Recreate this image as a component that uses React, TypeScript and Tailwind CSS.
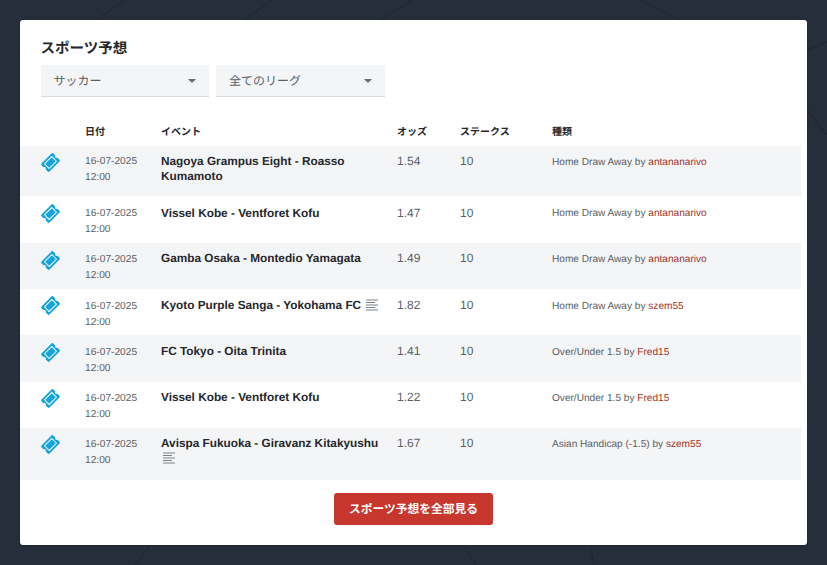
import React from "react";
import { FaTicketAlt } from "react-icons/fa";

const rows = [
  { event: "Nagoya Grampus Eight - Roasso Kumamoto", odds: "1.54", type: "Home Draw Away", user: "antananarivo", height: "h-[50px]", icon: "pt-[8px]", date: "pt-[8px]", main: "pt-[8px]", by: "pt-[9px]" },
  { event: "Vissel Kobe - Ventforet Kofu", odds: "1.47", type: "Home Draw Away", user: "antananarivo", height: "h-[47px]", icon: "pt-[9px]", date: "pt-[10px]", main: "pt-[10px]", by: "pt-[10px]" },
  { event: "Gamba Osaka - Montedio Yamagata", odds: "1.49", type: "Home Draw Away", user: "antananarivo", height: "h-[46px]", icon: "pt-[9px]", date: "pt-[9px]", main: "pt-[8px]", by: "pt-[9px]" },
  { event: "Kyoto Purple Sanga - Yokohama FC", odds: "1.82", type: "Home Draw Away", user: "szem55", notes: true, height: "h-[46px]", icon: "pt-[8px]", date: "pt-[10px]", main: "pt-[9px]", by: "pt-[10px]" },
  { event: "FC Tokyo - Oita Trinita", odds: "1.41", type: "Over/Under 1.5", user: "Fred15", height: "h-[47px]", icon: "pt-[9px]", date: "pt-[10px]", main: "pt-[9px]", by: "pt-[10px]" },
  { event: "Vissel Kobe - Ventforet Kofu", odds: "1.22", type: "Over/Under 1.5", user: "Fred15", height: "h-[46px]", icon: "pt-[8px]", date: "pt-[9px]", main: "pt-[8px]", by: "pt-[9px]" },
  { event: "Avispa Fukuoka - Giravanz Kitakyushu", odds: "1.67", type: "Asian Handicap (-1.5)", user: "szem55", notes: true, height: "h-[52px]", icon: "pt-[8px]", date: "pt-[9px]", main: "pt-[8px]", by: "pt-[9px]" },
];

function NotesIcon() {
  return (
    <svg width="13" height="13" viewBox="0 0 13 13" className="ml-[1.5px] inline-block align-[-3px]" fill="#7b8087">
      <rect x="0" y="0.5" width="12" height="1" />
      <rect x="0" y="3" width="9" height="1" />
      <rect x="0" y="5.5" width="12" height="1" />
      <rect x="0" y="8" width="9" height="1" />
      <rect x="0" y="10.5" width="12" height="1" />
    </svg>
  );
}

function Select({ label }: { label: string }) {
  return (
    <div className="flex h-8 w-[168.5px] items-center justify-between border-b border-[#d9dce0] bg-[#f4f5f7] pl-[13px] pr-[13px] text-[12px] text-[#5c5f64]">
      <span>{label}</span>
      <span className="h-0 w-0 border-x-[4.5px] border-t-[4.5px] border-x-transparent border-t-[#666b72]" />
    </div>
  );
}

export default function App() {
  return (
    <div className="relative min-h-screen overflow-hidden bg-[#262d3b] px-5 py-5 font-['Liberation_Sans','Noto_Sans_CJK_JP',sans-serif] [text-rendering:geometricPrecision]">
      <svg className="absolute inset-0" width="827" height="565" fill="none" stroke="#1f2531" strokeWidth="1">
        <path d="M96 20L125 0M245 20L272 0M380 20L412 0M640 0L680 20M807 50L827 42M807 110L827 135" />
        <path d="M135 565L150 545M462 545L477 565M590 545L594 565" />
      </svg>
      <div className="relative h-[525px] w-[787px] rounded-[3px] bg-white pt-[19px] shadow-sm">
        <h2 className="pl-[20.5px] text-[14.5px] leading-[20px] font-bold text-[#24272c]">スポーツ予想</h2>
        <div className="mt-[6px] flex gap-[7px] pl-[20.5px]">
          <Select label="サッカー" />
          <Select label="全てのリーグ" />
        </div>
        <table className="mt-[19px] w-[781px] table-fixed border-collapse text-left">
          <colgroup>
            <col className="w-[65px]" />
            <col className="w-[76px]" />
            <col className="w-[236px]" />
            <col className="w-[63px]" />
            <col className="w-[92px]" />
            <col />
          </colgroup>
          <thead>
            <tr className="h-[30px] text-[10px] font-bold text-[#24272c]">
              <th className="pt-[2px] font-bold" />
              <th className="pt-[2px] font-bold">日付</th>
              <th className="pt-[2px] font-bold">イベント</th>
              <th className="pt-[2px] font-bold">オッズ</th>
              <th className="pt-[2px] font-bold">ステークス</th>
              <th className="pt-[2px] font-bold">種類</th>
            </tr>
          </thead>
          <tbody>
            {rows.map((row, i) => (
              <tr key={i} className={`${row.height} ${i % 2 === 0 ? "bg-[#f4f5f7]" : "bg-white"} align-top`}>
                <td className={`pl-[22px] ${row.icon}`}>
                  <FaTicketAlt size={17} color="#14a5dc" className="-rotate-45" />
                </td>
                <td className={`${row.date} text-[10.2px] leading-[15.5px] text-[#5c5f64]`}>
                  16-07-2025
                  <br />
                  12:00
                </td>
                <td className={`pr-[14px] ${row.main} text-[11.8px] leading-[14.5px] font-bold text-[#24272c]`}>
                  {row.event}
                  {row.notes && (
                    <>
                      {" "}
                      <NotesIcon />
                    </>
                  )}
                </td>
                <td className={`${row.main} text-[12px] leading-[15px] text-[#5c5f64]`}>{row.odds}</td>
                <td className={`${row.main} text-[12px] leading-[15px] text-[#5c5f64]`}>10</td>
                <td className={`${row.by} text-[10.1px] leading-[15px] text-[#5c5f64]`}>
                  {row.type} by <span className="text-[#a5332a]">{row.user}</span>
                </td>
              </tr>
            ))}
          </tbody>
        </table>
        <div className="mt-[13px] flex justify-center">
          <button className="h-8 w-[159px] rounded-[3px] bg-[#c8372d] text-[11.75px] font-bold text-white">スポーツ予想を全部見る</button>
        </div>
      </div>
    </div>
  );
}
